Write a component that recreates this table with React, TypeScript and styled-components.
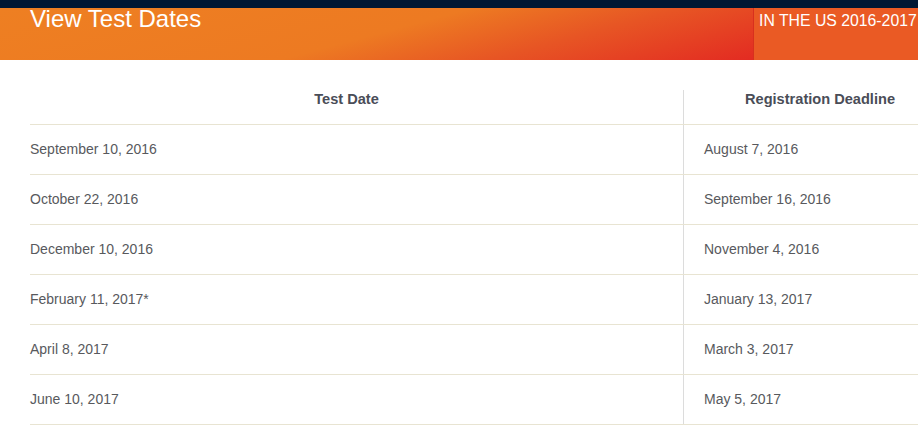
import React from "react";
import styled, { createGlobalStyle } from "styled-components";

const Global = createGlobalStyle`
  html, body { margin: 0; padding: 0; background: #fff; overflow: hidden; }
  body { font-family: "Liberation Sans", Arial, sans-serif; }
`;

const TopBar = styled.div`
  height: 8px;
  background: #001733;
`;

const Banner = styled.div`
  display: flex;
  height: 52px;
`;

const BannerMain = styled.div`
  width: 723px;
  padding-left: 30px;
  border-right: 1px solid #d8301e;
  background: linear-gradient(165deg, #ee7f22 0%, #ed7a22 50%, #e75524 72%, #e32b22 100%);
`;

const Title = styled.h1`
  margin: 0;
  font-size: 24px;
  font-weight: normal;
  line-height: 22px;
  padding-top: 0;
  color: #fff;
`;

const BannerSide = styled.div`
  flex: 1;
  background: #ea5a24;
  padding-left: 5px;
`;

const Subtitle = styled.div`
  font-size: 15.8px;
  line-height: 18px;
  padding-top: 4px;
  color: #fff;
  white-space: nowrap;
`;

const Table = styled.div`
  margin: 30px 0 0 30px;
  width: 926px;
`;

const Row = styled.div<{ $head?: boolean }>`
  display: grid;
  grid-template-columns: 654px 272px;
  height: ${(p) => (p.$head ? "34px" : "49px")};
  border-bottom: 1px solid #e8e4d2;
`;

const Cell = styled.div<{ $head?: boolean; $first?: boolean }>`
  display: flex;
  align-items: ${(p) => (p.$head ? "flex-start" : "center")};
  justify-content: ${(p) => (p.$head ? "center" : "flex-start")};
  padding: ${(p) => (p.$first ? "0 20px 0 0" : "0 20px")};
  padding-bottom: ${(p) => (p.$head ? "0" : "2px")};
  border-right: ${(p) => (p.$first ? "1px solid #dcdcdc" : "none")};
  font-size: ${(p) => (p.$head ? "14.6px" : "14px")};
  line-height: ${(p) => (p.$head ? "18px" : "16px")};
  font-weight: ${(p) => (p.$head ? "bold" : "normal")};
  color: ${(p) => (p.$head ? "#4a4d57" : "#58595d")};
  white-space: nowrap;
`;

const rows: [string, string][] = [
  ["September 10, 2016", "August 7, 2016"],
  ["October 22, 2016", "September 16, 2016"],
  ["December 10, 2016", "November 4, 2016"],
  ["February 11, 2017*", "January 13, 2017"],
  ["April 8, 2017", "March 3, 2017"],
  ["June 10, 2017", "May 5, 2017"],
];

export default function App() {
  return (
    <>
      <Global />
      <TopBar />
      <Banner>
        <BannerMain>
          <Title>View Test Dates</Title>
        </BannerMain>
        <BannerSide>
          <Subtitle>IN THE US 2016-2017</Subtitle>
        </BannerSide>
      </Banner>
      <Table>
        <Row $head>
          <Cell $head $first>Test Date</Cell>
          <Cell $head>Registration Deadline</Cell>
        </Row>
        {rows.map(([a, b]) => (
          <Row key={a}>
            <Cell $first>{a}</Cell>
            <Cell>{b}</Cell>
          </Row>
        ))}
      </Table>
    </>
  );
}
